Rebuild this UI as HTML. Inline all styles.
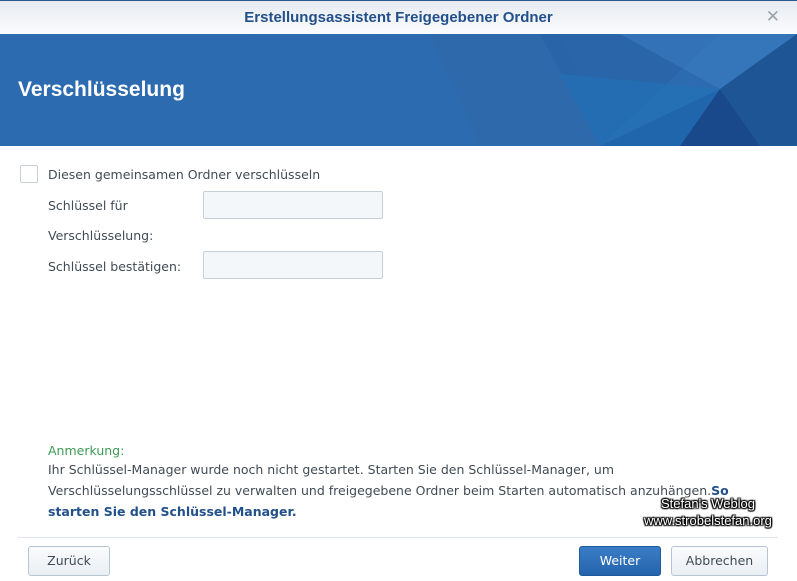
<!DOCTYPE html>
<html><head><meta charset="utf-8"><style>
*{margin:0;padding:0;box-sizing:border-box}
body{width:797px;height:581px;overflow:hidden;background:#fff;font-family:"DejaVu Sans","Liberation Sans",sans-serif;font-size:12.5px;color:#414b55;position:relative}
.top{position:absolute;left:0;top:0;width:797px;height:34px;background:linear-gradient(#e6eaf1,#fbfcfd);border-top:1px solid #2a5890}
.top .t{position:absolute;left:0;right:0;top:8px;text-align:center;font-family:"Liberation Sans",sans-serif;font-weight:bold;font-size:15px;color:#22508a}
.top .x{position:absolute;right:17px;top:6px;font-family:"Liberation Sans",sans-serif;font-size:17px;color:#9aa2ab}
.ban{position:absolute;left:0;top:34px;width:797px;height:112px;background:#2d6bb0;overflow:hidden}
.ban h1{position:absolute;left:18px;top:44px;font-family:"Liberation Sans",sans-serif;font-size:21px;font-weight:bold;color:#fff}
.a{position:absolute;color:#414b55}
.cb{position:absolute;left:20px;top:165px;width:18px;height:18px;border:1px solid #c7cfd8;border-radius:2px;background:#fff}
.in{position:absolute;left:203px;width:180px;height:28px;border:1px solid #c7d0da;background:#f4f7fa;border-radius:2px}
.btn{position:absolute;top:546px;height:30px;border:1px solid #b8c4d1;border-radius:3px;background:linear-gradient(#fafcfd,#eaeff4);text-align:center;line-height:28px;font-size:12.5px;color:#414b55}
.wm{position:absolute;font-family:"Liberation Sans",sans-serif;color:#fff;font-size:13px;text-shadow:0 0 2px #000,0 0 2px #000,1px 1px 1px #000,-1px -1px 1px #000,1px -1px 1px #000,-1px 1px 1px #000}
</style></head><body>
<div class="top"><div class="t">Erstellungsassistent Freigegebener Ordner</div><div class="x">✕</div></div>
<div class="ban">
<svg width="797" height="112" style="position:absolute;left:0;top:0">
<polygon points="430,0 560,0 610,112 480,112" fill="#2e68aa" opacity=".6"/>
<polygon points="540,0 720,0 600,112" fill="#2a63a6" opacity=".7"/>
<polygon points="620,0 797,0 720,55" fill="#3a7bbf" opacity=".6"/>
<polygon points="720,55 797,0 797,112 760,112" fill="#1e5595"/>
<polygon points="600,112 720,55 680,112" fill="#1f66ad"/>
<polygon points="680,112 720,55 760,112" fill="#19498a"/>
<polygon points="560,40 720,55 600,112" fill="#2270b8" opacity=".7"/>
</svg>
<h1>Verschlüsselung</h1></div>
<div class="cb"></div>
<div class="a" style="left:48px;top:167px">Diesen gemeinsamen Ordner verschlüsseln</div>
<div class="a" style="left:48px;top:198px">Schlüssel für</div>
<div class="a" style="left:48px;top:228px">Verschlüsselung:</div>
<div class="a" style="left:48px;top:259px">Schlüssel bestätigen:</div>
<div class="in" style="top:191px"></div>
<div class="in" style="top:251px"></div>
<div class="a" style="left:48px;top:443px;color:#3d9a55">Anmerkung:</div>
<div class="a" style="left:48px;top:459px;width:700px;line-height:21px">Ihr Schlüssel-Manager wurde noch nicht gestartet. Starten Sie den Schlüssel-Manager, um Verschlüsselungsschlüssel zu verwalten und freigegebene Ordner beim Starten automatisch anzuhängen.<b style="color:#22508a">So starten Sie den Schlüssel-Manager.</b></div>
<div class="wm" style="left:661px;top:496px">Stefan's Weblog</div>
<div class="wm" style="left:644px;top:513px">www.strobelstefan.org</div>
<div style="position:absolute;left:18px;top:537px;width:760px;height:1px;background:#dfe4ea"></div>
<div class="btn" style="left:28px;width:82px">Zurück</div>
<div class="btn" style="left:579px;width:82px;background:linear-gradient(#3a7dc6,#2564ad);border-color:#1f5a9e;color:#fff">Weiter</div>
<div class="btn" style="left:671px;width:97px">Abbrechen</div>
</body></html>
